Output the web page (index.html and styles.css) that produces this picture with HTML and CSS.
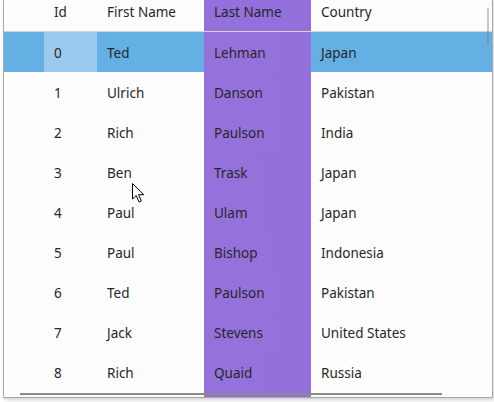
FILE: index.html
```html
<!DOCTYPE html>
<html>
<head>
<meta charset="utf-8">
<link rel="stylesheet" href="styles.css">
</head>
<body>
<div class="frame">
  <div class="grid">
    <div class="row header">
      <div class="cell rh"></div>
      <div class="cell">Id</div>
      <div class="cell">First Name</div>
      <div class="cell last">Last Name</div>
      <div class="cell">Country</div>
    </div>
    <div class="row selected">
      <div class="cell rh"></div>
      <div class="cell id-current">0</div>
      <div class="cell">Ted</div>
      <div class="cell last"><span class="tb">Lehman</span></div>
      <div class="cell">Japan</div>
    </div>
    <div class="row">
      <div class="cell rh"></div>
      <div class="cell">1</div>
      <div class="cell">Ulrich</div>
      <div class="cell last"><span class="tb">Danson</span></div>
      <div class="cell">Pakistan</div>
    </div>
    <div class="row">
      <div class="cell rh"></div>
      <div class="cell">2</div>
      <div class="cell">Rich</div>
      <div class="cell last"><span class="tb">Paulson</span></div>
      <div class="cell">India</div>
    </div>
    <div class="row">
      <div class="cell rh"></div>
      <div class="cell">3</div>
      <div class="cell">Ben</div>
      <div class="cell last"><span class="tb">Trask</span></div>
      <div class="cell">Japan</div>
    </div>
    <div class="row">
      <div class="cell rh"></div>
      <div class="cell">4</div>
      <div class="cell">Paul</div>
      <div class="cell last"><span class="tb">Ulam</span></div>
      <div class="cell">Japan</div>
    </div>
    <div class="row">
      <div class="cell rh"></div>
      <div class="cell">5</div>
      <div class="cell">Paul</div>
      <div class="cell last"><span class="tb">Bishop</span></div>
      <div class="cell">Indonesia</div>
    </div>
    <div class="row">
      <div class="cell rh"></div>
      <div class="cell">6</div>
      <div class="cell">Ted</div>
      <div class="cell last"><span class="tb">Paulson</span></div>
      <div class="cell">Pakistan</div>
    </div>
    <div class="row">
      <div class="cell rh"></div>
      <div class="cell">7</div>
      <div class="cell">Jack</div>
      <div class="cell last"><span class="tb">Stevens</span></div>
      <div class="cell">United States</div>
    </div>
    <div class="row">
      <div class="cell rh"></div>
      <div class="cell">8</div>
      <div class="cell">Rich</div>
      <div class="cell last"><span class="tb">Quaid</span></div>
      <div class="cell">Russia</div>
    </div>
    <div class="row">
      <div class="cell rh"></div>
      <div class="cell"></div>
      <div class="cell"></div>
      <div class="cell last"></div>
      <div class="cell"></div>
    </div>
  </div>
  <div class="vscroll"></div>
  <div class="hscroll"></div>
</div>
<svg class="cursor" width="14" height="21" viewBox="0 0 14 21">
  <path d="M0.5 0.5 L0.5 16 L4.2 12.5 L7 19 L9.3 18 L6.6 11.7 L11.8 11.7 Z" fill="#fff" stroke="#000" stroke-width="1" stroke-linejoin="miter"/>
</svg>
</body>
</html>
```
FILE: styles.css
```css
html, body {
  margin: 0;
  padding: 0;
  background: #ffffff;
}
body {
  width: 494px;
  height: 402px;
  overflow: hidden;
  position: relative;
  font-family: "Noto Sans", "Open Sans", sans-serif;
  font-size: 13.5px;
  color: #262626;
}
.frame {
  position: relative;
  margin-left: 3px;
  width: 488px;
  height: 397px;
  border-left: 1px solid #a9a9a9;
  border-right: 1px solid #a9a9a9;
  border-bottom: 1px solid #a9a9a9;
  box-shadow: 1px 2px 3px rgba(0,0,0,0.18);
  background: #fdfdfd;
  overflow: hidden;
}
.grid {
  display: flex;
  flex-direction: column;
}
.row {
  display: grid;
  grid-template-columns: 40px 53px 107px 107px 1fr;
  height: 40px;
}
.row.header {
  height: 31px;
  border-bottom: 1px solid #d4d4d4;
}
.cell {
  display: flex;
  align-items: center;
  padding-left: 10px;
  padding-top: 2px;
  white-space: nowrap;
}
.header .cell {
  padding-top: 0;
  padding-bottom: 7px;
}
.cell.rh {
  padding: 0;
}
.cell.last {
  background: #9370db;
  padding-left: 0;
  padding-top: 0;
  align-items: stretch;
}
.tb {
  display: flex;
  align-items: center;
  padding: 2px 11px 2px 10px;
  margin: 5px 0 3px 0;
  background: rgba(255,255,255,0.02);
}
.header .cell.last {
  padding-left: 10px;
  align-items: center;
}
.row.selected {
  background: #64b0e4;
}
.cell.id-current {
  background: #9ccaee;
}
.vscroll {
  position: absolute;
  right: 3px;
  top: 8px;
  width: 2px;
  height: 36px;
  background: rgba(120,120,120,0.4);
}
.hscroll {
  position: absolute;
  left: 16px;
  top: 393px;
  width: 422px;
  height: 2px;
  background: #8a8a8a;
}
.cursor {
  position: absolute;
  left: 132px;
  top: 183px;
}
```
